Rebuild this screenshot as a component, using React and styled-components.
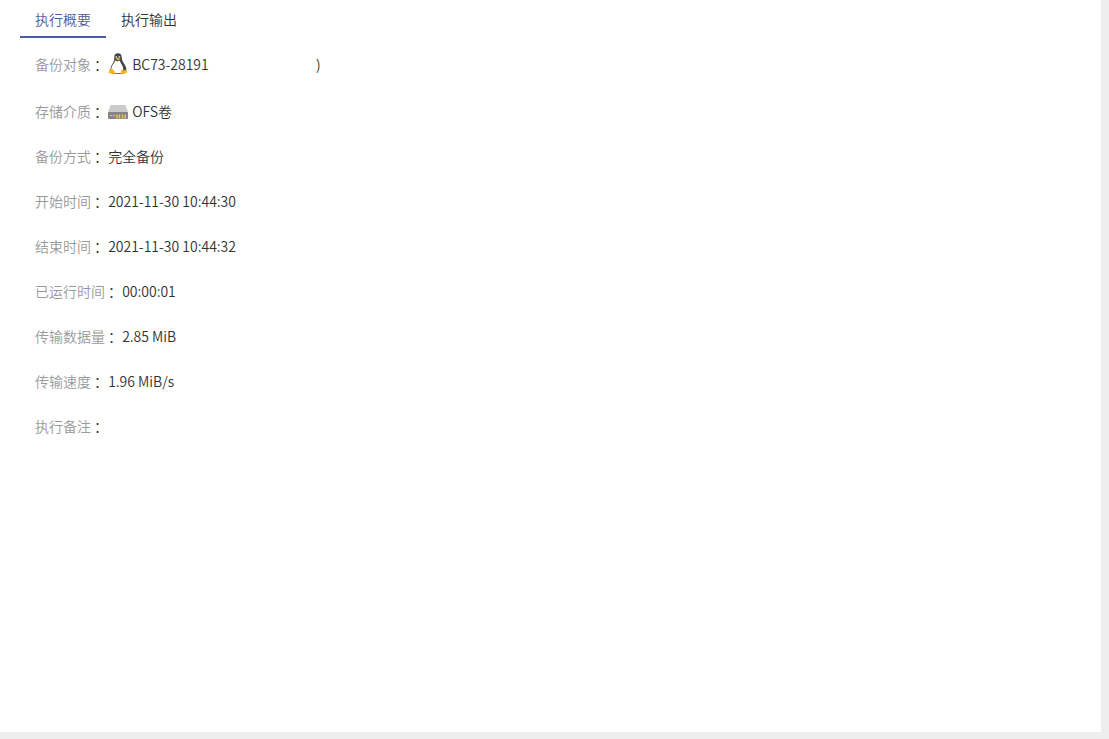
import { useState } from 'react';

import styled, { createGlobalStyle } from 'styled-components';

const GlobalStyle = createGlobalStyle`
  * {
    box-sizing: border-box;
  }

  body {
    margin: 0;
    background: #eeeeee;
    color: #333333;
    font-family: "Noto Sans CJK SC", sans-serif;
    font-size: 14px;
    font-weight: 350;
    line-height: 21px;
  }
`;

const Page = styled.div`
  display: flex;
  height: 100vh;
  padding: 0 8px 7px 0;
`;

const Panel = styled.main`
  flex: 1;
  padding: 0 20px;
  background: #ffffff;
`;

const TabList = styled.div`
  display: flex;
`;

const Tab = styled.button`
  height: 38px;
  padding: 2px 15px 0;
  border: 0;
  border-bottom: 2px solid ${({ $active }) => ($active ? '#515a9e' : 'transparent')};
  background: none;
  color: ${({ $active }) => ($active ? '#515a9e' : '#333333')};
  font: inherit;
  cursor: pointer;
`;

const Details = styled.dl`
  margin: 0;
  padding: 2px 15px;
`;

const Row = styled.div`
  display: flex;
  align-items: center;
  padding: 12px 0;
`;

const Label = styled.dt`
  white-space: pre;
`;

const LabelText = styled.span`
  color: #999999;
`;

const Value = styled.dd`
  display: flex;
  align-items: center;
  gap: 4px;
  margin: 0;
`;

const Icon = styled.svg`
  display: block;
  width: 20px;
  height: ${({ $height }) => $height}px;
`;

const HiddenAddress = styled.span`
  width: 108px;
  text-align: right;
`;

function LinuxIcon() {
  return (
    <Icon $height={25} viewBox="0 0 20 25" aria-hidden="true">
      <path d="M6.3 4.9C6.3 2.4 7.8 1.3 10 1.3s3.7 1.1 3.7 3.7c0 3 1 4.6 2.5 6.8 1.9 2.5 2.4 5.1 2.1 7.5L15.5 22h-11L2.4 17.7c.1-2.8 1.1-4.4 2.4-6.5 1.3-2 1.5-3.6 1.5-6.3z" fill="#444444" />
      <path d="M7.2 8.6c1.4 1 3.2 1 4.6 0 .4 2.2 2.8 4.4 3.3 7.4.4 2.8-.6 5.2-2 5.2H6.8L3.3 16.8c.3-2.8 1.5-4.3 2.7-5.8z" fill="#ffffff" />
      <ellipse cx="8.3" cy="5" rx=".9" ry="1.1" fill="#c9c9c9" />
      <ellipse cx="11.3" cy="5" rx="1" ry="1.1" fill="#c9c9c9" />
      <path d="M7.4 6.9 9.8 5.8l2.7 1.1-2.5 1.4z" fill="#f5b324" />
      <path d="M1.2 17.8 3.8 16.4l3.4 3.8c.8 1.6-.5 2.2-2 1.9L.6 21zM13.2 17.5l1.7 1 3.2-.8 1.4 2.6-4 1.8c-2.4.7-3-.6-2.7-2.2z" fill="#f5b324" />
    </Icon>
  );
}

function StorageIcon() {
  return (
    <Icon $height={14} viewBox="0 0 20 14" aria-hidden="true">
      <path d="M2.6 0h14.8L20 7H0z" fill="#cbcbcb" />
      <path d="M0 7h20v6q0 1-1 1H1q-1 0-1-1z" fill="#858585" />
      <path d="M2 10.5h2M5 10.5h2" stroke="#f0c35c" />
      <path d="M9 9.5v4M11.5 9.5v4M14.5 9.5v4M17.2 9.5v4" stroke="#f0c35c" strokeWidth="1.4" />
    </Icon>
  );
}

const rows = [
  {
    label: '备份对象',
    value: (
      <>
        <LinuxIcon />
        BC73-28191
        <HiddenAddress>)</HiddenAddress>
      </>
    ),
  },
  {
    label: '存储介质',
    value: (
      <>
        <StorageIcon />
        OFS卷
      </>
    ),
  },
  { label: '备份方式', value: '完全备份' },
  { label: '开始时间', value: '2021-11-30 10:44:30' },
  { label: '结束时间', value: '2021-11-30 10:44:32' },
  { label: '已运行时间', value: '00:00:01' },
  { label: '传输数据量', value: '2.85 MiB' },
  { label: '传输速度', value: '1.96 MiB/s' },
  { label: '执行备注', value: '' },
];

const tabs = ['执行概要', '执行输出'];

export default function App() {
  const [activeTab, setActiveTab] = useState(tabs[0]);

  return (
    <Page lang="zh-CN">
      <GlobalStyle />
      <Panel>
        <TabList role="tablist">
          {tabs.map((tab) => (
            <Tab
              key={tab}
              type="button"
              role="tab"
              aria-selected={tab === activeTab}
              $active={tab === activeTab}
              onClick={() => setActiveTab(tab)}
            >
              {tab}
            </Tab>
          ))}
        </TabList>
        {activeTab === tabs[0] && (
          <Details>
            {rows.map(({ label, value }) => (
              <Row key={label}>
                <Label>
                  <LabelText>{label}</LabelText>
                  {' ：'}
                </Label>
                <Value>{value}</Value>
              </Row>
            ))}
          </Details>
        )}
      </Panel>
    </Page>
  );
}
